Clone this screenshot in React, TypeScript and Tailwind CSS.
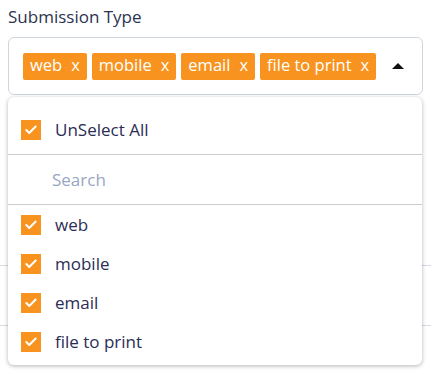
import { Check } from "lucide-react";

const selected = ["web", "mobile", "email", "file to print"];

function Box() {
  return (
    <span className="flex h-5 w-5 shrink-0 items-center justify-center bg-[#f7931e]">
      <Check size={14} strokeWidth={3.5} color="#ffffff" />
    </span>
  );
}

export default function App() {
  return (
    <div className="relative h-[376px] w-[431px] overflow-hidden bg-white">
      <div className="px-2 pt-[5px]">
        <label className="block text-[17px] leading-6 text-[#2b3450] [font-family:'Open_Sans',sans-serif]">
          Submission Type
        </label>

        {/* control */}
        <div className="mt-2 flex h-[58px] w-[415px] items-center rounded-md border border-[#cfd5df] pl-[14px] pr-[18px]">
          <div className="flex flex-1 items-center gap-[5px]">
            {selected.map((s) => (
              <span
                key={s}
                className="flex h-[27px] items-center gap-[9px] rounded-[2px] bg-[#f7931e] px-[7px] pb-px text-[16.5px] text-white [font-family:'Open_Sans',sans-serif]"
              >
                {s}
                <span>x</span>
              </span>
            ))}
          </div>
          <svg width="12" height="6" viewBox="0 0 12 6">
            <path d="M0 6 L6 0 L12 6 Z" fill="#111" />
          </svg>
        </div>
      </div>

      {/* fields behind the menu */}
      <div className="h-[171px] w-full border-b border-[#d5dbe6]" />
      <div className="h-[60px] w-full border-b border-[#d5dbe6]" />

      {/* dropdown menu */}
      <div className="absolute left-2 top-[97px] w-[414px] rounded-md bg-white pb-1 shadow-[0_1px_4px_rgba(0,0,0,0.3)] [font-family:'Open_Sans',sans-serif] text-[17px] text-[#2b2d55]">
        <div className="flex h-[58px] items-center gap-[14px] border-b border-[#cccccc] pl-[13px] pt-[8px]">
          <Box />
          <span>UnSelect All</span>
        </div>
        <div className="flex h-[50px] items-center border-b border-[#cccccc] pl-[44px]">
          <span className="text-[#9aa6c2]">Search</span>
        </div>
        {selected.map((s) => (
          <div key={s} className="flex h-[39px] items-center gap-[14px] pl-[13px]">
            <Box />
            <span>{s}</span>
          </div>
        ))}
      </div>
    </div>
  );
}
